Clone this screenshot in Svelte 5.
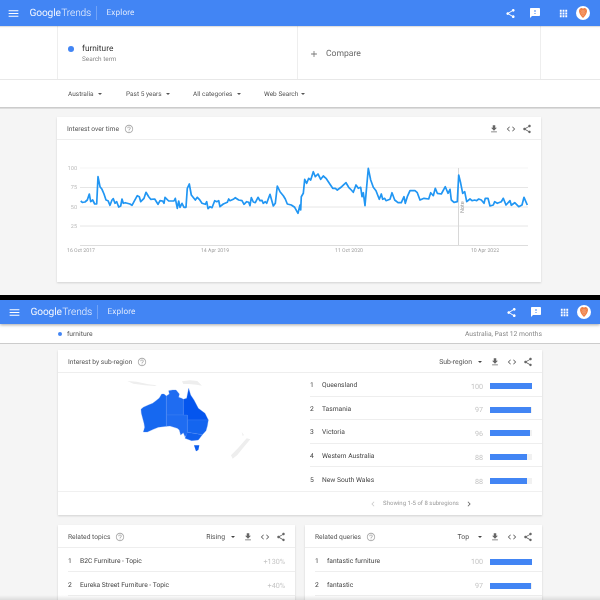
<script>
  const P = {
    share: "M18 16.08c-.76 0-1.44.3-1.96.77L8.91 12.7c.05-.23.09-.46.09-.7s-.04-.47-.09-.7l7.05-4.11c.54.5 1.25.81 2.04.81 1.66 0 3-1.34 3-3s-1.34-3-3-3-3 1.34-3 3c0 .24.04.47.09.7L8.04 9.81C7.5 9.31 6.79 9 6 9c-1.66 0-3 1.34-3 3s1.34 3 3 3c.79 0 1.5-.31 2.04-.81l7.12 4.16c-.05.21-.08.43-.08.65 0 1.61 1.31 2.92 2.92 2.92 1.61 0 2.92-1.31 2.92-2.92s-1.31-2.92-2.92-2.92z",
    download: "M19 9h-4V3H9v6H5l7 7 7-7zM5 18v2h14v-2H5z",
    code: "M9.4 16.6L4.8 12l4.6-4.6L8 6l-6 6 6 6 1.4-1.4zm5.2 0l4.6-4.6-4.6-4.6L16 6l6 6-6 6-1.4-1.4z",
    feedback: "M20 2H4c-1.1 0-1.99.9-1.99 2L2 22l4-4h14c1.1 0 2-.9 2-2V4c0-1.1-.9-2-2-2zm-7 12h-2v-2h2v2zm0-4h-2V6h2v4z",
    menu: "M3 18h18v-2H3v2zm0-5h18v-2H3v2zm0-7v2h18V6H3z",
    apps: "M4 8h4V4H4v4zm6 12h4v-4h-4v4zm-6 0h4v-4H4v4zm0-6h4v-4H4v4zm6 0h4v-4h-4v4zm6-10v4h4V4h-4zm-6 4h4V4h-4v4zm6 6h4v-4h-4v4zm0 6h4v-4h-4v4z",
    help: "M11 18h2v-2h-2v2zm1-16C6.48 2 2 6.48 2 12s4.48 10 10 10 10-4.48 10-10S17.52 2 12 2zm0 18c-4.41 0-8-3.59-8-8s3.59-8 8-8 8 3.59 8 8-3.59 8-8 8zm0-14c-2.21 0-4 1.79-4 4h2c0-1.1.9-2 2-2s2 .9 2 2c0 2-3 1.75-3 5h2c0-2.25 3-2.5 3-5 0-2.21-1.79-4-4-4z",
    prev: "M15.41 7.41L14 6l-6 6 6 6 1.41-1.41L10.83 12z",
    next: "M10 6L8.59 7.41 13.17 12l-4.58 4.59L10 18l6-6z",
    plus: "M19 13h-6v6h-2v-6H5v-2h6V5h2v6h6v2z"
  };
  const z3 = "92,153 97,157 105,156 112,150 118,132 122,155 128,150 134,162 140,162 144,80 150,110 156,118 162,132 168,150 174,152 180,166 186,150 190,146 195,160 200,155 206,171 212,168 216,147 220,160 226,158 240,162 246,166 252,155 262,137 268,140 272,155 282,145 288,127 296,140 302,148 314,147 324,163 330,152 338,153 342,160 345,142 356,153 372,153 376,145 382,175 386,153 390,172 396,160 402,172 408,172 412,115 418,102 424,135 436,150 442,142 448,148 456,160 466,163 470,155 474,176 480,170 486,173 494,152 500,155 506,152 510,170 520,162 532,157 536,147 540,152 550,148 556,143 566,150 576,152 582,163 590,155 596,157 600,167 604,143 610,156 616,158 624,142 630,152 636,151 640,160 646,155 650,160 660,133 670,168 676,160 682,108 690,125 700,137 706,147 712,162 724,165 734,172 744,190 750,165";
  const z4 = "2,180 4,140 10,130 14,88 20,100 26,85 32,90 40,65 46,80 54,72 62,88 70,78 78,85 90,103 98,115 106,115 112,120 125,110 138,98 146,112 154,120 160,127 168,105 175,115 182,112 186,140 190,128 195,167 205,55 212,90 220,112 228,122 238,148 244,132 248,148 254,145 258,152 270,148 276,128 284,150 294,158 304,158 312,140 316,160 322,140 330,122 345,122 352,128 360,150 372,145 386,147 392,128 400,137 406,115 412,130 424,132 436,110 444,130 450,118 454,150 462,157 472,155 476,75 482,100 488,130 494,125 500,155 510,147 516,152 524,150 530,152 536,147 544,150 552,160 556,145 564,145 570,168 580,165 584,155 592,160 604,155 610,145 618,165 630,152 634,166 644,158 656,170 666,165 672,142 682,165";
  const conv = (s, ox, oy) => s.split(" ").map(p => { const [x, y] = p.split(",").map(Number); return `${(x / 3 + ox).toFixed(1)},${(y / 3 + oy).toFixed(1)}`; }).join(" ");
  const line = conv(z3, 50 - 57, 150 - 140) + " " + conv(z4, 300 - 57, 150 - 140);
  const grid = [{ y: 28, l: "100" }, { y: 47.5, l: "75" }, { y: 67, l: "50" }, { y: 86, l: "25" }];
  const dates = [{ x: 24, l: "16 Oct 2017" }, { x: 158, l: "14 Apr 2019" }, { x: 292, l: "11 Oct 2020" }, { x: 428, l: "10 Apr 2022" }];
  const regions = [["Queensland", 100], ["Tasmania", 97], ["Victoria", 96], ["Western Australia", 88], ["New South Wales", 88]];
</script>

{#snippet icon(d)}
  <svg class="ic" viewBox="0 0 24 24"><path d={d} /></svg>
{/snippet}

{#snippet actions()}
  <div class="actions">
    {@render icon(P.download)}
    {@render icon(P.code)}
    {@render icon(P.share)}
  </div>
{/snippet}

{#snippet appbar(cls)}
  <header class="appbar {cls}">
    <svg class="menu" viewBox="0 0 24 24"><path d={P.menu} /></svg>
    <div class="logo"><span class="g">Google</span><span class="t">Trends</span></div>
    <div class="vr"></div>
    <div class="explore">Explore</div>
    <div class="bar-right">
      <svg class="hi" viewBox="0 0 24 24"><path d={P.share} /></svg>
      <svg class="hi fb" viewBox="0 0 24 24"><path d={P.feedback} /></svg>
      <svg class="hi apps" viewBox="0 0 24 24"><path d={P.apps} /></svg>
      <svg class="avatar" viewBox="0 0 28 28">
        <circle cx="14" cy="14" r="14" fill="#fff" />
        <path d="M14 24 C10 20 6 15 6 10 C6 6 9 4 11 4 C12.5 4 13.5 5 14 5.5 C14.5 5 15.5 4 17 4 C19 4 22 6 22 10 C22 15 18 20 14 24Z" fill="#ef7f45" />
        <path d="M10 9l2 2 2-2 2 2 2-2M10 13l2 2 2-2 2 2 2-2M12 17l2 2 2-2" fill="none" stroke="#fbd9c4" stroke-width="1.1" />
      </svg>
    </div>
  </header>
{/snippet}

{#snippet help()}
  <svg class="help" viewBox="0 0 24 24"><path d={P.help} /></svg>
{/snippet}

{#snippet caret()}
  <span class="caret"></span>
{/snippet}

{#snippet barRow(n, name, v)}
  <div class="row">
    <span class="num">{n}</span>
    <span class="name">{name}</span>
    <span class="val">{v}</span>
    <span class="track"><span class="fill" style="width:{v}%"></span></span>
  </div>
{/snippet}

<div class="root">
  <section class="shot one">
    {@render appbar("")}
    <div class="search">
      <div class="term">
        <span class="dot"></span>
        <div>
          <div class="t1">furniture</div>
          <div class="t2">Search term</div>
        </div>
      </div>
      <div class="compare">
        <svg class="plus" viewBox="0 0 24 24"><path d={P.plus} /></svg>
        <span>Compare</span>
      </div>
    </div>
    <div class="filters">
      <span class="f f1">Australia{@render caret()}</span>
      <span class="f f2">Past 5 years{@render caret()}</span>
      <span class="f f3">All categories{@render caret()}</span>
      <span class="f f4">Web Search{@render caret()}</span>
    </div>
    <div class="card chart-card">
      <div class="card-head">
        <span class="title">Interest over time</span>
        {@render help()}
        {@render actions()}
      </div>
      <svg class="chart" viewBox="0 0 484 142" width="484" height="142">
        {#each grid as g, i}
          <line x1="23" x2="471" y1={g.y} y2={g.y} stroke={i === 0 ? "#f5f5f5" : "#e6e6e6"} />
          <text x="20" y={g.y + 1.5} class="ax" text-anchor="end">{g.l}</text>
        {/each}
        <line x1="23" x2="471" y1="105.5" y2="105.5" stroke="#ddd" />
        <line x1="401.5" x2="401.5" y1="28" y2="105" stroke="#d8d8d8" />
        <polyline points={line} fill="none" stroke="#2196f3" stroke-width="1.7" stroke-linejoin="round" />
        <text class="note" transform="translate(407 73) rotate(-90)">Note</text>
        {#each dates as d}
          <text x={d.x} y="112" class="date" text-anchor="middle">{d.l}</text>
        {/each}
      </svg>
    </div>
  </section>

  <div class="black"></div>

  <section class="shot two">
    {@render appbar("second")}
    <div class="subbar">
      <div class="sub-inner">
        <span class="dot small"></span>
        <span class="sub-term">furniture</span>
        <span class="sub-scope">Australia, Past 12 months</span>
      </div>
    </div>

    <div class="card region-card">
      <div class="card-head">
        <span class="title">Interest by sub-region</span>
        {@render help()}
        <span class="sel">Sub-region{@render caret()}</span>
        {@render actions()}
      </div>
      <div class="region-body">
        <div class="map-col">
          <svg class="map" viewBox="0 0 540 300" width="180" height="100">
            <g fill="#eeeeee">
              <path d="M112 33 L140 35 L175 43 L200 46 L195 48 L165 46 L130 41Z" />
              <path d="M276 34 L300 31 L322 33 L336 47 L320 44 L296 42 L280 42Z" />
              <path d="M470 205 L481 208 L462 230 L442 255 L428 266 L423 256 L445 233Z" />
              <path d="M455 186 L462 195 L458 198Z" />
            </g>
            <g stroke="#4f89f5" stroke-width="1" stroke-opacity=".8">
              <path fill="#1668f0" d="M229 78 L229 169 L218 170 L205 172 L190 178 L172 186 L160 186 L164 172 L162 160 L158 145 L154 130 L153 118 L160 112 L175 105 L188 100 L198 92 L208 84 L215 72 L222 72Z" />
              <path fill="#1f6cf1" d="M229 78 L238 72 L236 62 L248 60 L258 60 L268 72 L266 82 L275 85 L280 88 L280 135 L229 135Z" />
              <path fill="#1f6cf1" d="M229 135 L292 135 L292 192 L285 200 L280 188 L272 195 L268 180 L262 175 L240 168 L229 169Z" />
              <path fill="#0455ee" d="M280 88 L290 85 L293 70 L296 55 L302 75 L312 90 L325 115 L345 130 L355 150 L292 150 L292 135 L280 135Z" />
              <path fill="#1465ef" d="M292 150 L355 150 L352 168 L348 182 L337 194 L292 187Z" />
              <path fill="#1060ee" d="M292 187 L337 194 L325 210 L305 212 L285 205Z" />
            </g>
            <path fill="#0a5cee" d="M312 226 L328 226 L325 240 L318 244Z" />
          </svg>
        </div>
        <div class="list">
          {#each regions as r, i}
            {@render barRow(i + 1, r[0], r[1])}
          {/each}
        </div>
      </div>
      <div class="pager">
        <svg class="pg off" viewBox="0 0 24 24"><path d={P.prev} /></svg>
        <span>Showing 1-5 of 8 subregions</span>
        <svg class="pg" viewBox="0 0 24 24"><path d={P.next} /></svg>
      </div>
    </div>

    <div class="pair">
      <div class="card half">
        <div class="card-head">
          <span class="title">Related topics</span>
          {@render help()}
          <span class="sel">Rising{@render caret()}</span>
          {@render actions()}
        </div>
        <div class="row"><span class="num">1</span><span class="name">B2C Furniture - Topic</span><span class="pct">+130%</span></div>
        <div class="row"><span class="num">2</span><span class="name">Eureka Street Furniture - Topic</span><span class="pct">+40%</span></div>
      </div>
      <div class="card half">
        <div class="card-head">
          <span class="title">Related queries</span>
          {@render help()}
          <span class="sel top">Top{@render caret()}</span>
          {@render actions()}
        </div>
        {@render barRow(1, "fantastic furniture", 100)}
        {@render barRow(2, "fantastic", 97)}
      </div>
    </div>
    <div class="fade"></div>
  </section>
</div>

<style>
  :global(body) { margin: 0; background: #f5f5f5; }
  .root { width: 600px; height: 600px; overflow: hidden; font-family: Roboto, "Liberation Sans", sans-serif; color: #4a4a4a; text-rendering: geometricPrecision; filter: blur(.3px); }
  .shot { position: relative; overflow: hidden; background: #f5f5f5; }
  .one { height: 295px; }
  .two { height: 300px; }
  .black { height: 5px; background: #000; }

  .appbar { position: relative; z-index: 2; height: 26px; background: #4285f4; display: flex; align-items: center; color: #fff; box-shadow: 0 1px 1px rgba(0,0,0,.12); }
  .appbar.second { height: 24px; padding-left: 1px; box-shadow: 0 1px 3px rgba(0,0,0,.35); }
  .menu { width: 13px; height: 13px; fill: #fff; margin-left: 6.5px; }
  .logo { margin-left: 10px; width: 57px; font-size: 10.2px; white-space: nowrap; letter-spacing: -.15px; color: #f1f5fe; }
  .logo .t { font-weight: 300; margin-left: .5px; }
  .vr { width: 1px; height: 14px; background: rgba(255,255,255,.25); margin-left: 9.5px; }
  .explore { margin-left: 9.5px; font-size: 8.2px; letter-spacing: .15px; color: #dfe9fd; margin-bottom: 1px; }
  .bar-right { margin-left: auto; display: flex; align-items: center; }
  .hi { width: 11px; height: 11px; fill: #fff; display: block; }
  .bar-right .hi:nth-child(1) { margin-right: 13px; }
  .fb { width: 12px; height: 12px; margin-right: 17px; }
  .apps { width: 11px; height: 11px; margin-right: 4.5px; }
  .avatar { width: 14px; height: 14px; margin-right: 10px; margin-left: 3px; }
  .second .avatar { margin-right: 9px; }

  .search { background: #fff; display: flex; padding-left: 57px; box-sizing: border-box; width: 600px; border-bottom: 1px solid #e8e8e8; height: 54px; }
  .term { width: 241px; box-sizing: border-box; border-left: 1px solid #eee; border-right: 1px solid #eee; display: flex; align-items: center; padding-left: 9.5px; gap: 8.5px; padding-top: 1px; }
  .dot { width: 6px; height: 6px; border-radius: 50%; background: #4285f4; flex: none; margin-top: -9px; }
  .dot.small { width: 4px; height: 4px; margin-top: 0; }
  .t1 { font-size: 8.3px; color: #333; line-height: 12px; }
  .t2 { font-size: 6.4px; color: #8a8a8a; line-height: 9px; }
  .compare { width: 243px; box-sizing: border-box; border-right: 1px solid #eee; display: flex; align-items: center; padding-left: 11px; gap: 7px; font-size: 8.6px; color: #6b6b6b; padding-top: 3px; }
  .plus { width: 10px; height: 10px; fill: #777; }

  .filters { height: 27px; background: #fff; border-bottom: 1px solid #ccc; display: flex; align-items: center; font-size: 6.5px; color: #555; position: relative; z-index: 1; box-shadow: 0 1px 0 #ddd; }
  .f { display: inline-flex; align-items: center; white-space: nowrap; }
  .f1 { margin-left: 68px; width: 58px; }
  .f2 { width: 67px; }
  .f3 { width: 71px; }
  .f4 .caret { margin-left: 2.5px; }
  .caret { display: inline-block; width: 0; height: 0; border-left: 2.5px solid transparent; border-right: 2.5px solid transparent; border-top: 2.5px solid #555; margin-left: 4.5px; }

  .card { background: #fff; box-shadow: 0 1px 2px rgba(0,0,0,.15); }
  .chart-card { width: 484px; height: 165px; margin: 9px 0 0 57px; }
  .card-head { height: 23px; display: flex; align-items: center; padding: 1px 9px 0 10px; border-bottom: 1px solid #eee; box-sizing: border-box; }
  .title { font-size: 6.7px; color: #555; white-space: nowrap; }
  .help { width: 10px; height: 10px; fill: #aaa; margin-left: 5px; flex: none; }
  .actions { display: flex; gap: 6.5px; flex: none; margin-left: 5.5px; }
  .chart-card .actions { margin-left: auto; }
  .ic { width: 10px; height: 10px; fill: #666; display: block; }
  .sel { margin-left: auto; font-size: 6.9px; color: #555; display: inline-flex; align-items: center; white-space: nowrap; }
  .sel .caret { border-top-color: #444; margin-left: 6px; margin-right: 2.5px; }
  .sel.top .caret { margin-left: 9px; }

  .chart { display: block; }
  .chart text { font-family: Roboto, "Liberation Sans", sans-serif; }
  .ax { font-size: 5.5px; fill: #bbb; }
  .date { font-size: 5.2px; fill: #a0a0a0; }
  .note { font-size: 5.5px; fill: #999; }

  .subbar { height: 19px; background: #fff; border-bottom: 1px solid #ccc; }
  .sub-inner { width: 484px; margin-left: 58px; height: 19px; display: flex; align-items: center; font-size: 6.75px; padding-top: 1px; box-sizing: border-box; }
  .sub-term { margin-left: 5px; color: #555; }
  .sub-scope { margin-left: auto; color: #888; }

  .region-card { width: 484px; height: 165px; margin: 6px 0 0 58px; }
  .region-body { display: flex; height: 118px; }
  .map-col { width: 242px; flex: none; padding-left: 32px; box-sizing: border-box; }
  .map { display: block; margin-top: -3px; }
  .list { flex: 1; min-width: 0; }
  .list .row { height: 23.6px; }
  .list .row:last-child { border-bottom: 0; }
  .row { height: 24px; box-sizing: border-box; display: flex; align-items: center; margin-left: 10px; border-bottom: 1px solid #eee; font-size: 6.7px; color: #444; padding-top: 2px; }
  .num { width: 12px; flex: none; }
  .name { flex: 1; white-space: nowrap; }
  .val { color: #c4c4c4; margin-top: 2px; font-size: 7.2px; }
  .pct { color: #c4c4c4; margin-right: 10px; margin-top: 2px; font-size: 7.2px; }
  .track { width: 42px; height: 6px; background: #f1f1f1; margin: 2px 10px 0 7px; display: block; flex: none; }
  .fill { display: block; height: 100%; background: #4285f4; }
  .pager { height: 24px; display: flex; align-items: center; justify-content: center; gap: 5px; font-size: 6px; color: #9a9a9a; padding-left: 242px; box-sizing: border-box; border-top: 1px solid #f0f0f0; }
  .pg { width: 10px; height: 10px; fill: #666; }
  .pg.off { fill: #ccc; }

  .pair { display: flex; gap: 10px; margin: 10px 0 0 58px; width: 484px; }
  .half { width: 237px; height: 80px; flex: none; }
  .fade { position: absolute; left: 0; right: 0; bottom: 0; height: 5px; background: linear-gradient(to bottom, rgba(0,0,0,0), rgba(0,0,0,.1)); }
</style>
